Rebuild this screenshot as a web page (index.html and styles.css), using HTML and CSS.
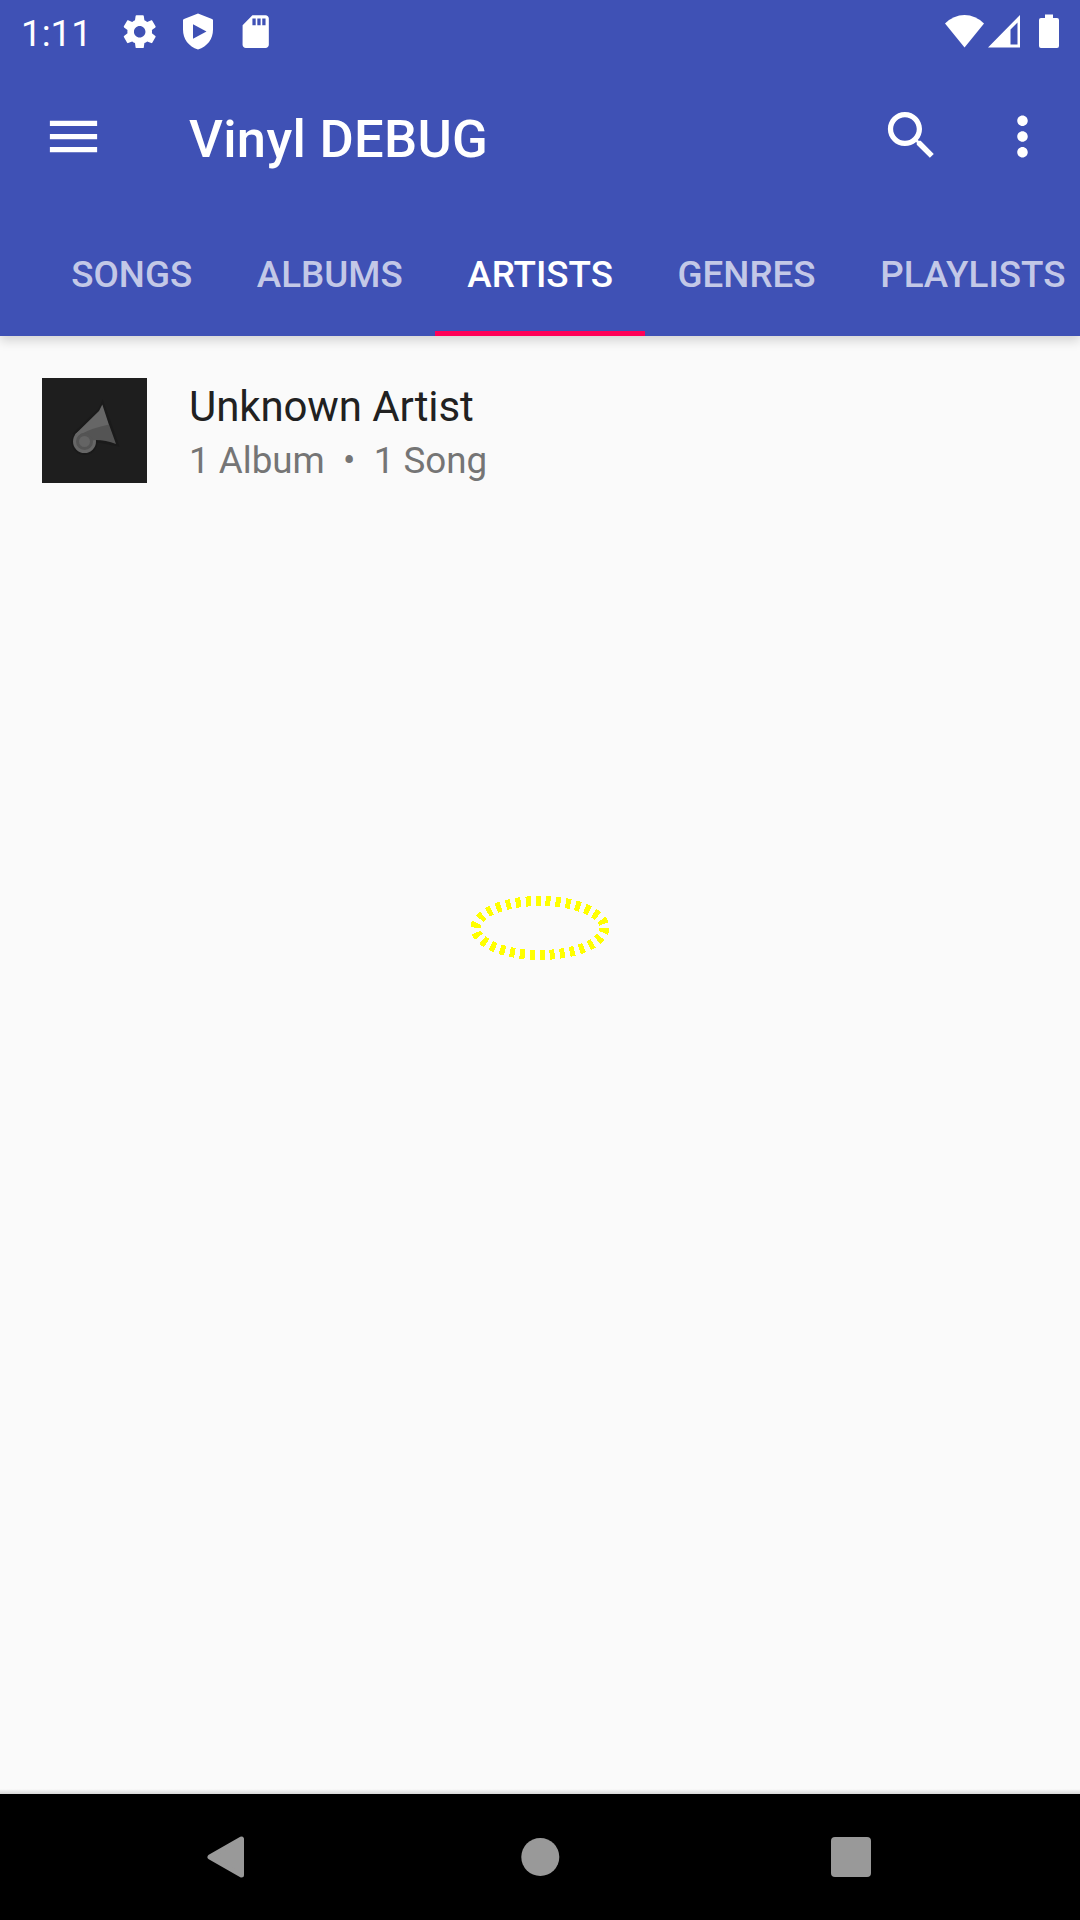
FILE: index.html
```html
<!DOCTYPE html>
<html lang="en">
<head>
<meta charset="utf-8">
<title>Vinyl DEBUG</title>
<link rel="stylesheet" href="styles.css">
</head>
<body>
<div class="screen">
  <header class="header">
    <div class="status">
      <span class="clock">1:11</span>
      <div class="notifications">
        <svg width="39.4" height="39.4" viewBox="0 0 24 24"><path d="M19.43 12.98c.04-.32.07-.64.07-.98s-.03-.66-.07-.98l2.11-1.65c.19-.15.24-.42.12-.64l-2-3.46c-.12-.22-.39-.3-.61-.22l-2.49 1c-.52-.4-1.08-.73-1.69-.98l-.38-2.65C14.46 2.18 14.25 2 14 2h-4c-.25 0-.46.18-.49.42l-.38 2.65c-.61.25-1.17.59-1.69.98l-2.49-1c-.23-.09-.49 0-.61.22l-2 3.46c-.13.22-.07.49.12.64l2.11 1.65c-.04.32-.07.65-.07.98s.03.66.07.98l-2.11 1.65c-.19.15-.24.42-.12.64l2 3.46c.12.22.39.3.61.22l2.49-1c.52.4 1.08.73 1.69.98l.38 2.65c.03.24.24.42.49.42h4c.25 0 .46-.18.49-.42l.38-2.65c.61-.25 1.17-.59 1.69-.98l2.49 1c.23.09.49 0 .61-.22l2-3.46c.12-.22.07-.49-.12-.64l-2.11-1.65zM12 15.5c-1.93 0-3.5-1.57-3.5-3.5s1.57-3.5 3.5-3.5 3.5 1.57 3.5 3.5-1.57 3.5-3.5 3.5z"/></svg>
        <svg width="30" height="37" viewBox="0 0 30 37"><path fill-rule="evenodd" d="M15 .5 29 6q1 .4 1 1.500V16.500C30 26 24.500 33.500 15 36.500 5.500 33.500 0 26 0 16.500V7.500Q0 6.400 1 6ZM10 11.300V25.700L23.500 18.500Z"/></svg>
        <svg width="39.4" height="39.4" viewBox="0 0 24 24"><path d="M18 2h-8L4.020 8 4 20c0 1.100.9 2 2 2h12c1.100 0 2-.9 2-2V4c0-1.100-.9-2-2-2zm-6 6h-2V4h2v4zm3 0h-2V4h2v4zm3 0h-2V4h2v4z"/></svg>
      </div>
      <div class="system">
        <svg width="39" height="34" viewBox="0 0 39 34"><path d="M0 9.500Q8.500 1 19.500 1T39 9.500L19.500 33.500Z"/></svg>
        <svg class="signal" width="32" height="34" viewBox="0 0 32 34"><path fill-rule="evenodd" d="M32 1V33.500H0ZM29.500 8.500 22.500 15.500V30.500H29.500Z"/></svg>
        <svg class="battery" width="20" height="34" viewBox="0 0 20 34"><path d="M6 .5h8V4h4q2 0 2 2V32q0 2-2 2H2q-2 0-2-2V6q0-2 2-2h4Z"/></svg>
      </div>
    </div>
    <div class="toolbar">
      <svg width="63" height="63" viewBox="0 0 24 24"><path d="M3 18h18v-2H3v2zm0-5h18v-2H3v2zm0-7v2h18V6H3z"/></svg>
      <h1 class="title">Vinyl DEBUG</h1>
      <svg class="search" width="63" height="63" viewBox="0 0 24 24"><path d="M15.500 14h-.79l-.28-.27C15.410 12.590 16 11.110 16 9.500 16 5.910 13.090 3 9.500 3S3 5.910 3 9.500 5.910 16 9.500 16c1.610 0 3.090-.59 4.230-1.570l.27.28v.79l5 4.990L20.490 19l-4.990-5zm-6 0C7.010 14 5 11.990 5 9.500S7.010 5 9.500 5 14 7.010 14 9.500 11.990 14 9.500 14z"/></svg>
      <svg class="more" width="63" height="63" viewBox="0 0 24 24"><path d="M12 8c1.100 0 2-.9 2-2s-.9-2-2-2-2 .9-2 2 .9 2 2 2zm0 2c-1.100 0-2 .9-2 2s.9 2 2 2 2-.9 2-2-.9-2-2-2zm0 6c-1.100 0-2 .9-2 2s.9 2 2 2 2-.9 2-2-.9-2-2-2z"/></svg>
    </div>
    <nav class="tabs">
      <span class="tab">SONGS</span>
      <span class="tab">ALBUMS</span>
      <span class="tab active">ARTISTS</span>
      <span class="tab">GENRES</span>
      <span class="tab">PLAYLISTS</span>
    </nav>
  </header>
  <main class="content">
    <div class="row">
      <svg class="art" width="105" height="105" viewBox="0 0 105 105">
        <rect width="105" height="105" fill="#1e1e1e"/>
        <path d="M34 55 58 32 60.500 26.500 74.500 66 62 63.500 54 62Z" fill="#1a1a1a" stroke="#1a1a1a" stroke-width="4"/>
        <circle cx="42.500" cy="64" r="13" fill="#1a1a1a"/>
        <circle cx="42.500" cy="63.500" r="11.500" fill="#666"/>
        <path d="M33 56.500 57 33 60.300 26.500 67 47 54 62 42.500 63.500Z" fill="#666"/>
        <path d="M38 56.500Q50 50 67 46.500L74 66Q64 62 53.500 62L42.500 63.500Z" fill="#545454"/>
        <circle cx="42.500" cy="63.500" r="7" fill="#646464" stroke="#545454" stroke-width="3"/>
      </svg>
      <div class="labels">
        <div class="name">Unknown Artist</div>
        <div class="detail">1 Album&nbsp; •&nbsp; 1 Song</div>
      </div>
    </div>
    <svg class="marker" width="140" height="66" viewBox="0 0 140 66"><ellipse cx="70" cy="33" rx="64.500" ry="27" fill="none" stroke="#ff0" stroke-width="10" stroke-dasharray="5 5" shape-rendering="crispEdges"/></svg>
  </main>
  <footer class="navbar">
    <svg width="42" height="44" viewBox="0 0 42 44"><path d="M36.500 4V40L5 22Z" stroke="#999" stroke-width="5" stroke-linejoin="round"/></svg>
    <svg width="42" height="44" viewBox="0 0 42 44"><circle cx="22.300" cy="22" r="19"/></svg>
    <svg width="42" height="44" viewBox="0 0 42 44"><rect x="1" y="2" width="40" height="40" rx="4"/></svg>
  </footer>
</div>
</body>
</html>
```
FILE: styles.css
```css
* { box-sizing: border-box; }
body { margin: 0; font-family: Roboto, "Liberation Sans", sans-serif; }
svg { display: block; flex: none; }
.screen { width: 1080px; height: 1920px; display: flex; flex-direction: column; overflow: hidden; background: #fafafa; }
.header { position: relative; height: 336px; background: #3f51b5; color: #fff; fill: #fff; box-shadow: 0 5px 10px rgba(0, 0, 0, .15); }
.status { display: flex; align-items: center; height: 63px; padding: 0 21px; }
.clock { font-size: 36.75px; line-height: 43px; width: 99px; padding-top: 4px; }
.notifications { display: flex; align-items: center; gap: 23.5px; flex: 1; }
.system { display: flex; align-items: center; padding-bottom: 2px; }
.signal { margin-left: 3.5px; }
.battery { margin-left: 19.5px; }
.toolbar { display: flex; align-items: center; height: 147px; padding: 0 26px 0 42px; }
.title { flex: 1; margin: 0; padding: 4px 0 0 84px; font-size: 52.5px; line-height: 62px; font-weight: 500; letter-spacing: .3px; }
.search { margin-bottom: 2px; }
.more { margin-left: 48px; }
.tabs { display: flex; height: 126px; padding-left: 39px; overflow: hidden; }
.tab { flex: none; padding: 0 32.3px; font-size: 36.75px; line-height: 130px; font-weight: 500; color: rgba(255, 255, 255, .7); }
.active { color: #fff; border-bottom: 5px solid #ff0057; }
.content { flex: 1; display: flex; flex-direction: column; align-items: center; padding-top: 10.5px; background: linear-gradient(to top, #d8d8d8, #fafafa 5px); }
.row { display: flex; align-items: center; align-self: stretch; gap: 42px; height: 168px; padding: 0 42px; margin-bottom: 380.5px; }
.labels { padding-top: 6px; }
.name { font-size: 42px; line-height: 49px; letter-spacing: -.1px; color: #212121; }
.detail { margin-top: 5px; font-size: 36.75px; line-height: 49px; color: #757575; white-space: nowrap; }
.navbar { display: flex; align-items: center; justify-content: space-between; height: 126px; padding: 0 208px 0 205px; background: #000; fill: #999; }
```
